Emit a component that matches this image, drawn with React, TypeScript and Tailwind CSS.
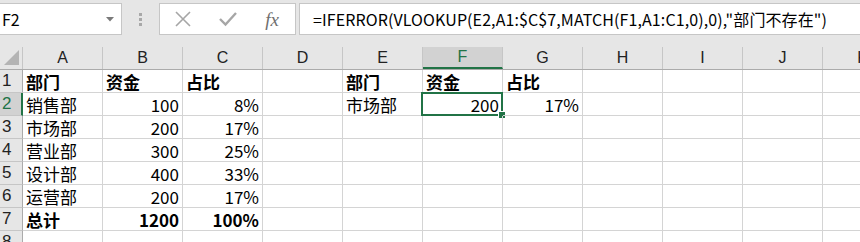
import React from 'react';

type Cell = { v: string; bold?: boolean; right?: boolean };

const COLS = ['A', 'B', 'C', 'D', 'E', 'F', 'G', 'H', 'I', 'J', 'K'];

const c = (v: string, bold = false, right = false): Cell => ({ v, bold, right });
const blank: Cell = { v: '' };

// grid data by row, columns A..K
const ROWS: Cell[][] = [
  [c('部门', true), c('资金', true), c('占比', true), blank, c('部门', true), c('资金', true), c('占比', true)],
  [c('销售部'), c('100', false, true), c('8%', false, true), blank, c('市场部'), c('200', false, true), c('17%', false, true)],
  [c('市场部'), c('200', false, true), c('17%', false, true)],
  [c('营业部'), c('300', false, true), c('25%', false, true)],
  [c('设计部'), c('400', false, true), c('33%', false, true)],
  [c('运营部'), c('200', false, true), c('17%', false, true)],
  [c('总计', true), c('1200', true, true), c('100%', true, true)],
  [],
];

const FormulaBar: React.FC = () => (
  <div className="h-[47px] bg-[#e6e6e6] relative flex items-start pt-[3px]">
    {/* name box */}
    <div className="w-[122px] h-[32px] bg-white border border-l-0 border-[#c6c6c6] flex items-center justify-between pl-[2px] pr-[7px]">
      <span className="text-[16px] text-black">F2</span>
      <svg width="8" height="5" viewBox="0 0 8 5">
        <path d="M0 0 L8 0 L4 4.5 Z" fill="#7a7a7a" />
      </svg>
    </div>
    {/* grip */}
    <div className="w-[37px] h-[32px] flex flex-col items-center justify-center gap-[2px]">
      <div className="w-[3px] h-[3px] bg-[#a8a8a8]" />
      <div className="w-[3px] h-[3px] bg-[#a8a8a8]" />
      <div className="w-[3px] h-[3px] bg-[#a8a8a8]" />
    </div>
    {/* buttons */}
    <div className="w-[137px] h-[32px] bg-white border border-[#c6c6c6] flex items-center">
      <div className="w-[46px] flex justify-center">
        <svg width="18" height="18" viewBox="0 0 18 18">
          <path d="M2 2 L16 16 M16 2 L2 16" stroke="#a6a6a6" strokeWidth="1.6" fill="none" />
        </svg>
      </div>
      <div className="w-[44px] flex justify-center">
        <svg width="18" height="16" viewBox="0 0 18 16">
          <path d="M1 8 L6.5 13.5 L17 2" stroke="#a6a6a6" strokeWidth="2.4" fill="none" />
        </svg>
      </div>
      <div className="w-[44px] flex justify-center">
        <span className="font-['Liberation_Serif',serif] italic text-[19px] text-[#6f6f6f] leading-none">fx</span>
      </div>
    </div>
    {/* formula input */}
    <div className="ml-[3px] flex-1 h-[32px] bg-white border border-r-0 border-[#c6c6c6] flex items-center pl-[13px] whitespace-nowrap overflow-hidden">
      <span className="text-[16px] tracking-[0.1px] text-black">=IFERROR(VLOOKUP(E2,A1:$C$7,MATCH(F1,A1:C1,0),0),"部门不存在")</span>
    </div>
  </div>
);

const HeaderRow: React.FC = () => (
  <div className="flex h-[23px] bg-[#e6e6e6] border-b border-[#ababab]">
    <div className="w-[23px] shrink-0 border-r border-[#c6c6c6] relative">
      <svg className="absolute left-[4px] top-[3px]" width="15" height="15" viewBox="0 0 15 15">
        <path d="M15 0 L15 15 L0 15 Z" fill="#b4b4b4" />
      </svg>
    </div>
    {COLS.map((col) => {
      const sel = col === 'F';
      return (
        <div
          key={col}
          className={
            sel
              ? 'w-[80px] shrink-0 border-r border-[#c6c6c6] bg-[#d2d2d2] text-[#217346] border-b-2 border-b-[#217346] flex items-center justify-center text-[16px] font-["Liberation_Sans",sans-serif]'
              : 'w-[80px] shrink-0 border-r border-[#c6c6c6] text-[#222] flex items-center justify-center text-[16px] font-["Liberation_Sans",sans-serif]'
          }
        >
          {col}
        </div>
      );
    })}
  </div>
);

export default function App() {
  return (
    <div className="w-[860px] h-[242px] overflow-hidden bg-white font-['Noto_Sans_CJK_SC',sans-serif] text-black">
      <FormulaBar />
      <HeaderRow />
      {ROWS.map((row, ri) => {
        const rowSel = ri === 1;
        return (
          <div key={ri} className="flex h-[23px]">
            <div
              className={
                rowSel
                  ? 'w-[23px] shrink-0 bg-[#d2d2d2] border-b border-[#c6c6c6] border-r-2 border-r-[#217346] text-[#217346] pl-[2px] flex items-center text-[17px] font-["Liberation_Sans",sans-serif]'
                  : 'w-[23px] shrink-0 bg-[#e6e6e6] border-b border-[#c6c6c6] border-r border-r-[#ababab] text-[#222] pl-[2px] flex items-center text-[17px] font-["Liberation_Sans",sans-serif]'
              }
            >
              {ri + 1}
            </div>
            {COLS.map((col, ci) => {
              const cell = row[ci] ?? blank;
              const active = ri === 1 && col === 'F';
              return (
                <div
                  key={col}
                  className={
                    'w-[80px] shrink-0 border-r border-b border-[#d4d4d4] relative flex items-end px-[3px] leading-[21px] text-[17px] whitespace-nowrap ' +
                    (cell.right ? 'justify-end ' : 'justify-start ') +
                    (cell.bold ? 'font-bold' : 'font-normal')
                  }
                >
                  {cell.v}
                  {active && (
                    <div className="absolute -left-[2px] -top-[1px] w-[82px] h-[24px] border-2 border-[#217346]">
                      <div className="absolute -right-[5px] -bottom-[5px] w-[8px] h-[8px] bg-[#217346] border border-white" />
                    </div>
                  )}
                </div>
              );
            })}
          </div>
        );
      })}
    </div>
  );
}
